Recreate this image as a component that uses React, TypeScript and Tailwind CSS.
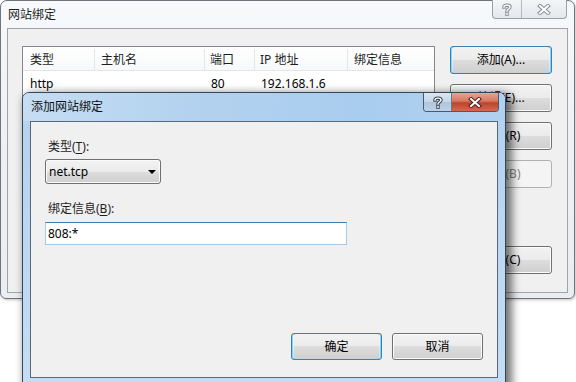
import React from "react";

function CapX({ red }: { red?: boolean }) {
  return (
    <svg width="14" height="11" viewBox="0 0 14 11">
      <path d="M3 2 L11 9 M11 2 L3 9" stroke={red ? "#4a2020" : "#8a8f96"} strokeWidth="4" strokeLinecap="square" fill="none" />
      <path d="M3 2 L11 9 M11 2 L3 9" stroke="#ffffff" strokeWidth="2" strokeLinecap="square" fill="none" />
    </svg>
  );
}

function CapQ({ dark }: { dark?: boolean }) {
  return (
    <svg width="10" height="13" viewBox="0 0 10 13">
      <path d="M2 4 C2 1.5 8 1.5 8 4 C8 6 5 6 5 8 M5 10.5 L5 11.5" stroke={dark ? "#3a4550" : "#8a8f96"} strokeWidth="3.4" fill="none" strokeLinecap="square" />
      <path d="M2 4 C2 1.5 8 1.5 8 4 C8 6 5 6 5 8 M5 10.5 L5 11.5" stroke="#ffffff" strokeWidth="1.4" fill="none" strokeLinecap="square" />
    </svg>
  );
}

function WinButton({
  label,
  variant = "normal",
  className = "",
}: {
  label: React.ReactNode;
  variant?: "normal" | "default" | "disabled";
  className?: string;
}) {
  const base =
    "flex items-center justify-center rounded-[3px] border text-[12px] leading-none";
  if (variant === "disabled")
    return (
      <div className={`${base} border-[#adb2b5] bg-[#f4f4f4] text-[#838383] ${className}`}>
        {label}
      </div>
    );
  if (variant === "default")
    return (
      <div
        className={`${base} border-[#3c7fb1] bg-[linear-gradient(180deg,#f2f9fd_0%,#eaf6fd_50%,#d9f0fc_50%,#bee6fd_100%)] shadow-[inset_0_0_0_1px_#7dd4f5] ${className}`}
      >
        <span className="m-[2px] flex h-full w-full items-center justify-center rounded-[2px] bg-[linear-gradient(180deg,#f2f2f2_0%,#ebebeb_50%,#dddddd_50%,#cfcfcf_100%)]">
          {label}
        </span>
      </div>
    );
  return (
    <div
      className={`${base} border-[#707070] bg-[linear-gradient(180deg,#f2f2f2_0%,#ebebeb_50%,#dddddd_50%,#cfcfcf_100%)] shadow-[inset_0_0_0_1px_#fcfcfc] ${className}`}
    >
      {label}
    </div>
  );
}

export default function App() {
  return (
    <div className="relative h-[382px] w-[576px] overflow-hidden bg-white text-[12px] text-black font-['Noto_Sans','Noto_Sans_CJK_SC',sans-serif]">
      {/* Main window */}
      <div className="absolute left-0 top-0 flex h-[299px] w-[575px] flex-col rounded-t-[7px] rounded-b-[6px] border border-[#707478] bg-[linear-gradient(180deg,#f7f9fb_0%,#eef2f6_40%,#eaeef2_100%)] shadow-[1px_1px_3px_rgba(0,0,0,0.25)]">
        <div className="relative flex h-[27px] items-center pl-[7px]">
          <span className="text-[#1e1e1e]">网站绑定</span>
          <div className="absolute right-[7px] top-[-1px] flex h-[19px] rounded-b-[4px] border border-t-0 border-[#9aa0a8] bg-[linear-gradient(180deg,#f3f5f7,#e4e8ec)]">
            <div className="flex w-[29px] items-center justify-center border-r border-[#b4b9bf]">
              <CapQ />
            </div>
            <div className="flex w-[44px] items-center justify-center">
              <CapX />
            </div>
          </div>
        </div>
        <div className="mx-[6px] mb-[5px] flex flex-1 border border-[#a0a4a8] bg-[#f0f0f0] pl-[14px] pr-[15px] pt-[17px]">
          {/* list */}
          <div className="flex h-[229px] w-[414px] flex-col border border-[#828790] bg-white">
            <div className="flex h-[24px] items-center border-b border-[#e5e5e5] bg-[linear-gradient(180deg,#ffffff,#f7f8f9)] pt-[2px] text-[#1e1e1e]">
              <div className="flex h-full w-[72px] items-center border-r border-[#e5e5e5] pl-[7px]">类型</div>
              <div className="flex h-full w-[110px] items-center border-r border-[#e5e5e5] pl-[6px]">主机名</div>
              <div className="flex h-full w-[50px] items-center border-r border-[#e5e5e5] pl-[5px]">端口</div>
              <div className="flex h-full w-[93px] items-center border-r border-[#e5e5e5] pl-[5px]">IP 地址</div>
              <div className="flex h-full flex-1 items-center pl-[6px]">绑定信息</div>
            </div>
            <div className="flex h-[23px] items-center pt-[3px]">
              <div className="w-[72px] pl-[7px]">http</div>
              <div className="w-[110px]" />
              <div className="w-[50px] pl-[6px]">80</div>
              <div className="w-[93px] pl-[6px]">192.168.1.6</div>
            </div>
          </div>
          <div className="ml-[15px] flex flex-col">
            <WinButton variant="default" label="添加(A)..." className="h-[28px] w-[102px]" />
            <WinButton label="编辑(E)..." className="mt-[10px] h-[28px] w-[102px]" />
            <WinButton label="删除(R)" className="mt-[10px] h-[28px] w-[102px]" />
            <WinButton variant="disabled" label="浏览(B)" className="mt-[10px] h-[28px] w-[102px]" />
            <WinButton label="关闭(C)" className="mt-[58px] h-[28px] w-[102px]" />
          </div>
        </div>
      </div>

      {/* Dialog */}
      <div className="absolute left-[22px] top-[92px] flex h-[294px] w-[484px] flex-col rounded-t-[7px] border border-[#3a4552] bg-[linear-gradient(180deg,#c2daf2_0%,#b4d3f1_12%,#bcd8f3_60%,#c4ddf4_100%)] shadow-[4px_3px_9px_2px_rgba(0,0,0,0.55)]">
        <div className="relative flex h-[28px] items-center rounded-t-[6px] bg-[linear-gradient(100deg,#c6ddf3_0%,#b3d2ef_35%,#a9cdef_70%,#b0d1f0_100%)] pl-[8px]">
          <span className="text-[#101010]">添加网站绑定</span>
          <div className="absolute right-[6px] top-0 flex h-[19px] overflow-hidden rounded-b-[4px] border border-t-0 border-[#4a5868]">
            <div className="flex w-[28px] items-center justify-center border-r border-[#6a7888] bg-[linear-gradient(180deg,#dbe7f3_0%,#c4d6e8_50%,#aec5dc_50%,#bcd2e8_100%)]">
              <CapQ dark />
            </div>
            <div className="flex w-[46px] items-center justify-center bg-[linear-gradient(180deg,#e8a493_0%,#d47862_45%,#c0432c_55%,#d2694f_100%)]">
              <CapX red />
            </div>
          </div>
        </div>
        <div className="mx-[7px] mb-[7px] flex flex-1 flex-col border border-[#5a6878] bg-[#f0f0f0] px-[14px]">
          <div className="mt-[17px] pl-[3px] leading-[16px] text-[#1e1e1e]">
            类型(<span className="underline underline-offset-2">T</span>):
          </div>
          <div className="mt-[4px] flex h-[25px] w-[116px] items-center justify-between rounded-[3px] border border-[#707070] bg-[linear-gradient(180deg,#f2f2f2_0%,#ebebeb_50%,#dddddd_50%,#cfcfcf_100%)] pl-[3px] pr-[4px] shadow-[inset_0_0_0_1px_#fbfbfb]">
            <span>net.tcp</span>
            <svg width="8" height="4" viewBox="0 0 8 4">
              <path d="M0 0 L8 0 L4 4 Z" fill="#000" />
            </svg>
          </div>
          <div className="mt-[17px] pl-[3px] leading-[16px] text-[#1e1e1e]">
            绑定信息(<span className="underline underline-offset-2">B</span>):
          </div>
          <div className="mt-[5px] flex h-[23px] w-[302px] items-center border border-[#a4c9e3] border-t-[#3d7bad] bg-white pl-[2px]">
            808:*
          </div>
          <div className="mb-[17px] mt-auto flex justify-end gap-[10px]">
            <WinButton variant="default" label="确定" className="h-[27px] w-[91px]" />
            <WinButton label="取消" className="h-[27px] w-[91px]" />
          </div>
        </div>
      </div>
    </div>
  );
}
